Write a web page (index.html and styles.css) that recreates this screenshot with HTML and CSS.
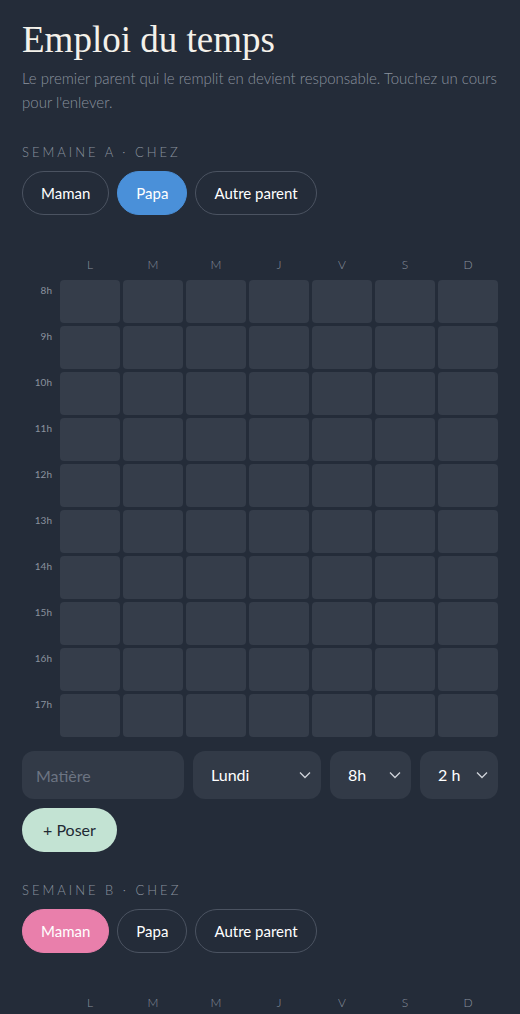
FILE: index.html
```html
<!DOCTYPE HTML>
<html>
<head>
    <title>Emploi du temps</title>
    <meta charset="utf-8" />
    <meta name="viewport" content="width=device-width, initial-scale=1" />
    <link rel="stylesheet" href="styles.css">
</head>
<body>
    <div id="wrapper">
        <h1 class="title">Emploi du temps</h1>
        <p class="intro">Le premier parent qui le remplit en devient responsable. Touchez un cours pour l'enlever.</p>

        <section class="week">
            <div class="week-label">Semaine A · chez</div>
            <div class="pills">
                <button class="pill">Maman</button>
                <button class="pill pill-papa">Papa</button>
                <button class="pill">Autre parent</button>
            </div>
            <div class="grid" data-week="A"></div>

            <div class="add-form">
                <input class="field field-text" type="text" placeholder="Matière">
                <div class="select-wrap">
                    <select class="field"><option>Lundi</option><option>Mardi</option></select>
                    <svg class="chevron" viewBox="0 0 12 8"><path d="M1 1.5 6 6.5 11 1.5" /></svg>
                </div>
                <div class="select-wrap">
                    <select class="field"><option>8h</option><option>9h</option></select>
                    <svg class="chevron" viewBox="0 0 12 8"><path d="M1 1.5 6 6.5 11 1.5" /></svg>
                </div>
                <div class="select-wrap">
                    <select class="field"><option>2 h</option><option>1 h</option></select>
                    <svg class="chevron" viewBox="0 0 12 8"><path d="M1 1.5 6 6.5 11 1.5" /></svg>
                </div>
            </div>
            <button class="poser">+ Poser</button>
        </section>

        <section class="week">
            <div class="week-label">Semaine B · chez</div>
            <div class="pills">
                <button class="pill pill-maman">Maman</button>
                <button class="pill">Papa</button>
                <button class="pill">Autre parent</button>
            </div>
            <div class="grid" data-week="B"></div>
        </section>
    </div>

    <script>
        document.addEventListener('DOMContentLoaded', () => {
            const days = ['L', 'M', 'M', 'J', 'V', 'S', 'D'];
            const hours = [8, 9, 10, 11, 12, 13, 14, 15, 16, 17];

            document.querySelectorAll('.grid').forEach(grid => {
                let html = '<div></div>';
                days.forEach(d => { html += `<div class="day">${d}</div>`; });
                hours.forEach(h => {
                    html += `<div class="hour">${h}h</div>`;
                    days.forEach(() => { html += '<div class="cell"></div>'; });
                });
                grid.innerHTML = html;
            });
        });
    </script>
</body>
</html>
```

FILE: styles.css
```css
html, body, div, h1, p, section, button, input, select { margin: 0; padding: 0; border: 0; font: inherit; }
html { box-sizing: border-box; }
*, *:before, *:after { box-sizing: inherit; }

body {
    background-color: #242c39;
    color: #ffffff;
    font-family: "Lato", "Open Sans", sans-serif;
    font-size: 16px;
    line-height: 1.5;
}

#wrapper {
    padding: 18px 22px 40px;
}

/* Header */
.title {
    font-family: "Liberation Serif", serif;
    font-size: 37px;
    line-height: 44px;
    color: #f4f1ea;
}

.intro {
    margin-top: 4px;
    font-size: 15px;
    line-height: 24px;
    font-weight: 300;
    color: #8a929e;
}

/* Week block */
.week {
    margin-top: 30px;
}

.week-label {
    font-size: 13px;
    line-height: 16px;
    letter-spacing: 3px;
    text-transform: uppercase;
    color: #8a929e;
    font-weight: 300;
}

.pills {
    display: flex;
    gap: 8px;
    margin-top: 11px;
}

.pill {
    height: 44px;
    padding: 0 18px;
    border-radius: 22px;
    border: 1px solid #4b5361;
    background: transparent;
    color: #ffffff;
    font-size: 15px;
    cursor: pointer;
}

.pill-papa {
    background: #4a90d9;
    border-color: #4a90d9;
}

.pill-maman {
    background: #e97fab;
    border-color: #e97fab;
}

/* Grid */
.grid {
    display: grid;
    grid-template-columns: 35px repeat(7, 1fr);
    grid-auto-rows: 43px;
    grid-template-rows: 22px;
    gap: 3px;
    margin-top: 40px;
}

.day {
    padding-top: 2px;
    font-size: 12px;
    line-height: 16px;
    text-align: center;
    color: #8a929e;
    font-weight: 300;
}

.hour {
    font-size: 10px;
    line-height: 12px;
    padding: 4px 5px 0 0;
    text-align: right;
    color: #8a929e;
}

.cell {
    background: #353d4a;
    border-radius: 4px;
}

/* Add form */
.add-form {
    display: grid;
    grid-template-columns: 1fr 128px 81px 78px;
    gap: 9px;
    margin-top: 14px;
}

.field {
    width: 100%;
    height: 48px;
    padding: 0 18px;
    border-radius: 12px;
    background: #323a47;
    color: #ffffff;
    font-size: 16px;
    outline: none;
    -webkit-appearance: none;
    appearance: none;
}

.field-text {
    padding-left: 14px;
}

.field::placeholder {
    color: #6c7482;
}

.select-wrap {
    position: relative;
}

.chevron {
    position: absolute;
    right: 10px;
    top: 20px;
    width: 12px;
    height: 8px;
    fill: none;
    stroke: #cfd3d9;
    stroke-width: 1.3;
    pointer-events: none;
}

.poser {
    margin-top: 9px;
    height: 44px;
    padding: 0 21px;
    border-radius: 22px;
    background: #c3e3d3;
    color: #1f2a33;
    font-size: 16px;
    cursor: pointer;
}
```
